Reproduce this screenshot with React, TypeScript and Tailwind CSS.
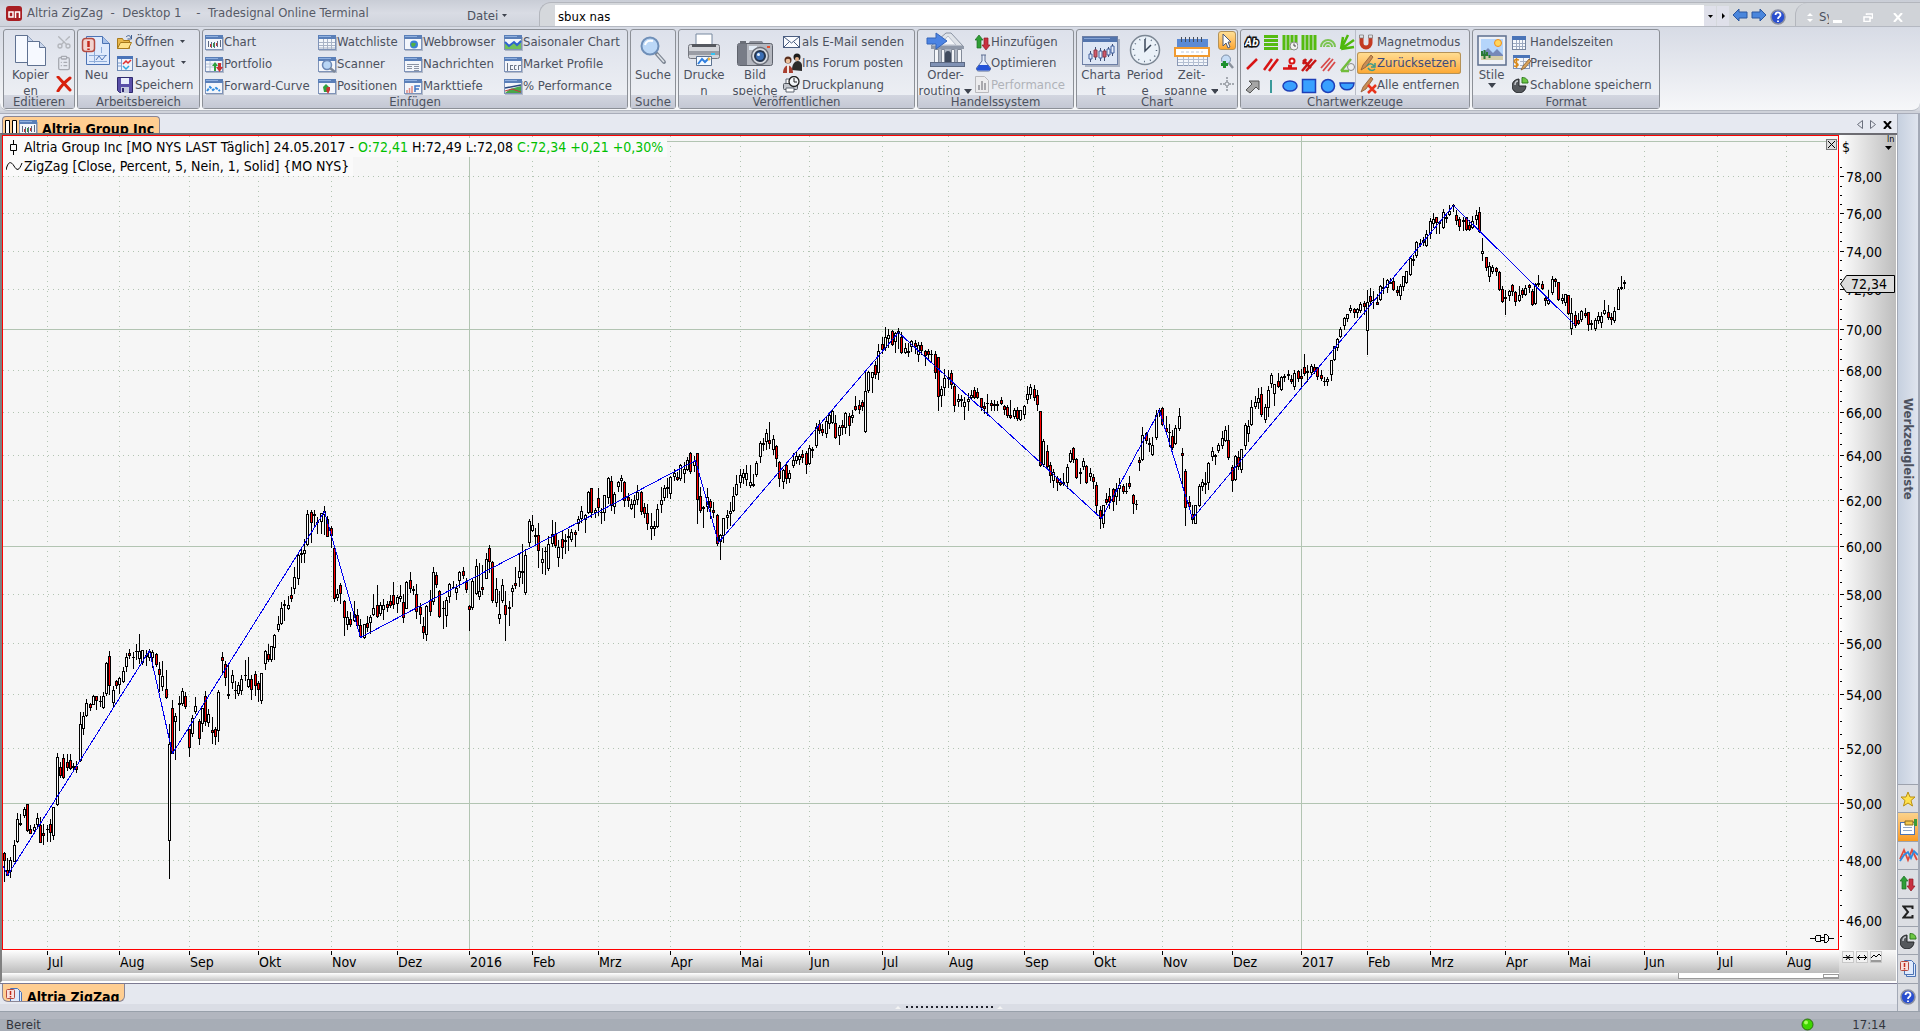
import React from 'react';
import { Scissors, ClipboardList } from 'lucide-react';

/**
 * Icons - small drawings for the ribbon, the tabs and the tool strip
 */
interface SvgProps {
  w: number;
  h: number;
  children: React.ReactNode;
}

const Svg = ({ w, h, children }: SvgProps) => (
  <svg width={w} height={h} viewBox={`0 0 ${w} ${h}`} className="shrink-0" aria-hidden="true">
    {children}
  </svg>
);

// Little window with a blue title bar, used by most of the insert buttons
const WindowIcon = ({ children }: { children?: React.ReactNode }) => (
  <Svg w={19} h={16}>
    <rect x="1" y="2" width="18" height="14" fill="#8f99ad" opacity=".6" />
    <rect x=".5" y=".5" width="17" height="14" fill="#f3f6fb" stroke="#7f93b8" />
    <rect x="0" y="0" width="18" height="4" fill="#5a7fb8" />
    <rect x="1" y="1" width="12" height="1" fill="#8fb0e0" />
    {children}
  </Svg>
);

const ChartIcon = () => (
  <WindowIcon>
    <path d="M3.500 6v6M6.500 7v6M9.500 7v6M12.500 6v6M15.500 5v7" stroke="#5b6780" />
    <path d="M5.500 9v3M11.500 8v3" stroke="#d0342c" />
    <path d="M8.500 8v4" stroke="#2fa13c" />
  </WindowIcon>
);
const PortfolioIcon = () => (
  <WindowIcon>
    <path d="M1 7h16M1 10h16M5 4v10" stroke="#b8c4d8" />
    <path d="M7 9l3-4 3 4h-2v5H9V9z" fill="#2fa13c" />
    <path d="M11 10h2V6h3v4h2l-3.500 5z" fill="#c83232" />
  </WindowIcon>
);
const CurveIcon = () => (
  <WindowIcon>
    <path d="M2 12l3-4 3 3 3-2 4 3" fill="none" stroke="#2e8be0" strokeWidth="2" strokeDasharray="3 1" />
  </WindowIcon>
);
const TableIcon = () => (
  <WindowIcon>
    <path d="M1 7.500h16M1 10.500h16M1 13h16M5.500 4v10M9.500 4v10M13.500 4v10" stroke="#a9b3c6" />
  </WindowIcon>
);
const ScannerIcon = () => (
  <WindowIcon>
    <circle cx="9" cy="8" r="4.500" fill="#b9d6f5" stroke="#6c88b5" strokeWidth="1.500" />
    <path d="M12 11l5 4" stroke="#7c8798" strokeWidth="2.500" />
  </WindowIcon>
);
const PositionIcon = () => (
  <WindowIcon>
    <path d="M5 8l3-3 3 3v5H6z" fill="#2fa13c" />
    <path d="M9 8h3v3l-2 4-2-4z" fill="#c83232" />
  </WindowIcon>
);
const BrowserIcon = () => (
  <WindowIcon>
    <circle cx="10" cy="9.500" r="4" fill="#3b82d6" />
    <path d="M7 9c2-3 3 0 5-1l-1 3-3 1z" fill="#52b043" />
  </WindowIcon>
);
const NewsIcon = () => (
  <WindowIcon>
    <path d="M3 7.500h12M3 9.500h5M3 11.500h5M10 9.500h5M10 11.500h5M10 13.500h5" stroke="#8b93a3" />
  </WindowIcon>
);
const DepthIcon = () => (
  <WindowIcon>
    <path d="M3 11v3M5.500 9v5M8 7v7" stroke="#e08a82" strokeWidth="1.500" />
    <path d="M11 13V7h5M11 10h4" stroke="#3f74c4" strokeWidth="1.500" fill="none" />
  </WindowIcon>
);
const SeasonIcon = () => (
  <WindowIcon>
    <path d="M1 14V8l4 3 5-4 3 3 4-5v9z" fill="#6fc15c" />
    <path d="M1 7l4 4 5-4 3 3 4-4" fill="none" stroke="#2e62d0" strokeWidth="2" />
  </WindowIcon>
);
const ProfileIcon = () => (
  <WindowIcon>
    <path d="M3.500 6v8M7 8.500h2M7 12.500h2M6.500 8v5M12.500 8.500h-2v4h2M14.500 13V8.500H17" stroke="#6b7587" fill="none" />
  </WindowIcon>
);
const PercentIcon = () => (
  <WindowIcon>
    <path d="M1 14l5-4 11-3v7z" fill="#4aa64a" />
    <path d="M1 9l16-3" stroke="#27477f" strokeWidth="1.500" />
    <path d="M1 12l7-2 9 3" stroke="#c23a3a" fill="none" />
  </WindowIcon>
);
const LayoutIcon = () => (
  <Svg w={16} h={16}>
    <rect x=".5" y="1.500" width="15" height="14" fill="#eef3fb" stroke="#6f8bb5" />
    <rect x="0" y="1" width="16" height="3" fill="#4a74b8" />
    <path d="M4.500 4v11M1 8h3M1 11h3" stroke="#7ea0d4" />
    <path d="M6 9l3-3 2 2 3-3" stroke="#e03030" fill="none" strokeWidth="1.500" />
    <path d="M6 11l3 3 3-3" stroke="#2fa7e0" fill="none" strokeWidth="1.500" />
  </Svg>
);

const CopyIcon = () => (
  <Svg w={34} h={33}>
    <g fill="#f6f9ff" stroke="#5f7191">
      <path d="M1.500 1.500h12l6 6v21h-18z" />
      <path d="M13.500 1.500v6h6" fill="#c9d6ec" />
      <path d="M13.500 7.500h12l6 6v18h-18z" />
      <path d="M25.500 7.500v6h6" fill="#c9d6ec" />
    </g>
  </Svg>
);
const NewIcon = () => (
  <Svg w={32} h={32}>
    <path d="M5.500 1.500h16l7 7v21h-23z" fill="#dfeafc" stroke="#4c73b4" />
    <path d="M21.500 1.500v7h7" fill="#a8c2ea" stroke="#4c73b4" />
    <path d="M8 20.500h18M8 26.500h18M13.500 12v16M20.500 12v6" stroke="#8fadd9" />
    <path d="M15 25l3-4 3 4 4-5" stroke="#4c73b4" fill="none" />
    <rect x="1.500" y="3.500" width="12" height="13" rx="3" fill="#f2d3cf" stroke="#b54a40" strokeWidth="1.500" />
    <path d="M7.500 6v6M7.500 13.500v1.500" stroke="#c4291c" strokeWidth="2.500" />
  </Svg>
);
const FolderIcon = () => (
  <Svg w={16} h={16}>
    <path d="M.5 14.500v-10h5l1 2h6v8z" fill="#e9b84c" stroke="#a87a1c" />
    <path d="M.5 14.500l3-6h11l-3 6z" fill="#ffe28a" stroke="#a87a1c" />
    <path d="M9 3c2-2 4-2 5 1M14.500 1v4h-4" stroke="#3f5f92" fill="none" />
  </Svg>
);
const SaveIcon = () => (
  <Svg w={16} h={16}>
    <path d="M.5.500h15v15h-13l-2-2z" fill="#5a4fa8" stroke="#2f2a6e" />
    <rect x="4" y="1" width="8" height="6" fill="#e9eefb" />
    <rect x="4" y="10" width="8" height="6" fill="#c6cbe0" />
    <rect x="5" y="11" width="2" height="4" fill="#2f2a6e" />
  </Svg>
);
const DeleteIcon = () => (
  <Svg w={16} h={16}>
    <path d="M2 1c3 3 8 9 12 13M14 2C9 6 5 10 2 15" stroke="#d8200c" strokeWidth="3" strokeLinecap="round" fill="none" />
  </Svg>
);
const SearchIcon = () => (
  <Svg w={28} h={32}>
    <path d="M17 18l8 9" stroke="#7e8794" strokeWidth="4" strokeLinecap="round" />
    <path d="M18 19l7 8" stroke="#dfe3e8" strokeWidth="1.500" />
    <circle cx="11" cy="11" r="8.500" fill="#bcd8f7" stroke="#6f8fb8" strokeWidth="2" />
    <path d="M6 10c1-4 4-5 8-4" stroke="#fff" strokeWidth="2" fill="none" />
  </Svg>
);
const PrinterIcon = () => (
  <Svg w={34} h={34}>
    <path d="M9 1h16v12H9z" fill="#fff" stroke="#76889f" />
    <rect x="1.500" y="11.500" width="31" height="14" rx="2" fill="#d3d5da" stroke="#74777f" />
    <rect x="2" y="18" width="30" height="4" fill="#9a9da5" />
    <path d="M5 11h24v3H5z" fill="#55585f" />
    <rect x="24" y="20" width="4" height="2" fill="#36c3f2" />
    <path d="M9.500 23.500h15v9h-15z" fill="#f5faff" stroke="#5c7291" />
    <path d="M11 31l4-5 3 3 4-4" stroke="#2f7fe0" strokeWidth="2" fill="none" />
    <circle cx="22" cy="26" r="1.500" fill="#f6b73c" />
  </Svg>
);
const CameraIcon = () => (
  <Svg w={38} h={27}>
    <path d="M12 4l2-3h12l2 3z" fill="#8b8f99" />
    <rect x="1.500" y="3.500" width="35" height="22" rx="2" fill="#b4b7bf" stroke="#5e626c" />
    <rect x="2" y="4" width="9" height="21" fill="#787c87" />
    <rect x="4" y="1" width="6" height="3" fill="#6a6e78" />
    <rect x="13" y="6" width="8" height="4" fill="#e3ecf7" />
    <circle cx="24" cy="16" r="8.500" fill="#d8dbe1" stroke="#6a6e78" strokeWidth="1.500" />
    <circle cx="24" cy="16" r="5" fill="#3c6fb5" stroke="#26364f" strokeWidth="2" />
    <circle cx="22.500" cy="14.500" r="1.500" fill="#e6f2ff" />
    <rect x="31" y="6" width="3" height="2" fill="#e8502f" />
  </Svg>
);
const MailIcon = () => (
  <Svg w={17} h={12}>
    <rect x=".5" y=".5" width="16" height="11" fill="#fbfcff" stroke="#4a5d80" />
    <path d="M1 1l7.500 6L16 1M1 11l5-5M16 11l-5-5" stroke="#4a5d80" fill="none" />
  </Svg>
);
const ForumIcon = () => (
  <Svg w={19} h={20}>
    <circle cx="14" cy="4" r="3.500" fill="#1d1d1d" />
    <path d="M9 17c0-11 9-11 10-5v6z" fill="#2c2c2c" />
    <circle cx="14" cy="6" r="2" fill="#e7b48e" />
    <circle cx="5" cy="7" r="3.500" fill="#5a2e1c" />
    <circle cx="5" cy="8" r="2.300" fill="#edc09c" />
    <path d="M0 20c0-10 10-10 10 0z" fill="#a83f30" />
    <path d="M4 12h2v8H4z" fill="#f2e8e4" />
  </Svg>
);
const PrintPlanIcon = () => (
  <Svg w={17} h={17}>
    <path d="M3 3h7v5H3z" fill="#fff" stroke="#5c6470" />
    <rect x=".5" y="7.500" width="14" height="6" rx="1" fill="#c4c7cd" stroke="#53575f" />
    <path d="M3 12h8v4H3z" fill="#fff" stroke="#5c6470" />
    <circle cx="11" cy="5.500" r="5" fill="#f4f6f9" stroke="#222" strokeWidth="1.300" />
    <path d="M11 2v4h3" stroke="#222" fill="none" />
  </Svg>
);
const BankIcon = () => (
  <Svg w={40} h={35}>
    <path d="M5 14L20 1h5l12 13z" fill="#dfe3e9" stroke="#8a93a3" />
    <path d="M22 4l8 9H14z" fill="#f4f6f9" stroke="#b6bdc9" />
    <rect x="5" y="14" width="33" height="3" fill="#8f98a8" />
    <rect x="8" y="17" width="27" height="14" fill="#aab2c0" />
    <path d="M8.500 17.500h4v13h-4zM15.500 17.500h3v13h-3zM25.500 17.500h3v13h-3zM31.500 17.500h4v13h-4z" fill="#f2f4f8" stroke="#838b99" />
    <path d="M19 31v-9c0-4 6-4 6 0v9z" fill="#3f4a5e" />
    <rect x="4.500" y="30.500" width="34" height="4" fill="#8092b5" stroke="#5d6a84" />
    <path d="M1 6h9V1l11 8-11 8v-5H1z" fill="#4c84e4" stroke="#3564b8" />
  </Svg>
);
const UpDownIcon = () => (
  <Svg w={16} h={17}>
    <path d="M0 6l4-5 4 5H6v8H2V6z" fill="#2f9e36" stroke="#1c6e23" strokeWidth=".7" />
    <path d="M7 11h2V4h4v7h2l-4 5z" fill="#c93040" stroke="#8c1824" strokeWidth=".7" />
  </Svg>
);
const FlaskIcon = () => (
  <Svg w={17} h={18}>
    <path d="M6 1h5M7 1v6L1.500 14c-.5 2 1 3 2 3h10c1 0 2.500-1 2-3L10 7V1" fill="#e6eefc" stroke="#5f6f92" />
    <path d="M4 11h9l2.500 3.500c0 1.500-1 2-2 2h-10c-1 0-2-.5-2-2z" fill="#2453d8" />
  </Svg>
);
const BarsIcon = () => (
  <Svg w={14} h={17}>
    <path d="M.5.500h9l4 4v12H.5z" fill="#ececee" stroke="#b9b9bd" />
    <path d="M3 14V9h2v5zM6 14V5h2v9zM9 14V7h2v7z" fill="#a8a8ad" />
  </Svg>
);
const ChartTypeIcon = () => (
  <Svg w={38} h={31}>
    <rect x="3" y="3" width="35" height="28" fill="#8690a5" opacity=".6" />
    <rect x=".5" y=".5" width="35" height="28" fill="#dde6f5" stroke="#6d7fa5" />
    <rect x="1" y="1" width="34" height="5" fill="#5274ad" />
    <rect x="2" y="2" width="26" height="1" fill="#86a3d4" />
    <path d="M8.500 15v11M13.500 11v13M18.500 12v13M22.500 13v12M26.500 11v10M30.500 8v12" stroke="#3f4f74" />
    <path d="M7 18h3v5H7zM17 15h3v7h-3zM25 13h3v6h-3zM29 10h3v7h-3z" fill="#e8eefa" stroke="#3f5f9e" />
    <path d="M12 14h3v7h-3zM21 15h3v6h-3z" fill="#d2586a" stroke="#8c3a48" />
  </Svg>
);
const ClockIcon = () => (
  <Svg w={32} h={33}>
    <circle cx="16" cy="16" r="14.500" fill="#eaf1f8" stroke="#7c8794" strokeWidth="1.500" />
    <circle cx="16" cy="16" r="11.500" fill="none" stroke="#5a6b80" strokeWidth="1.500" strokeDasharray="1 5" />
    <path d="M16 5v12l6-6" stroke="#3a4658" fill="none" strokeWidth="1.500" />
  </Svg>
);
const CalendarIcon = () => (
  <Svg w={36} h={31}>
    <rect x="3.500" y="3.500" width="30" height="26" fill="#f3f6fb" stroke="#8a98b4" />
    <rect x="3" y="3" width="31" height="8" fill="#5b8ad4" />
    <path d="M7.500 1v5M11.500 1v5M15.500 1v5M19.500 1v5M23.500 1v5M27.500 1v5" stroke="#444c5a" />
    <path d="M4 23.500h29M9.500 20v10M14.500 20v10M19.500 20v10M24.500 20v10M29.500 20v10M4 26.500h29" stroke="#b4bfd2" />
    <rect x="1" y="12" width="34" height="8" fill="#fff" stroke="#f09a30" strokeWidth="2" />
    <path d="M7 16h22" stroke="#dfe4ec" strokeWidth="2" strokeDasharray="3 2" />
  </Svg>
);
const PointerIcon = () => (
  <Svg w={12} h={16}>
    <path d="M2 1l8 8H7l2 5-2 1-2-5-3 3z" fill="#fff" stroke="#4a5878" />
  </Svg>
);
const ZoomInIcon = () => (
  <Svg w={16} h={16}>
    <path d="M9 8l5 6" stroke="#8a919c" strokeWidth="2.500" />
    <circle cx="7" cy="5.500" r="4.500" fill="#c6dcf5" stroke="#7d8fa8" />
    <path d="M5.500 7v7M2 10.500h7" stroke="#1c8f2d" strokeWidth="3" />
  </Svg>
);
const CrossIcon = () => (
  <Svg w={16} h={16}>
    <path d="M8 1v5M8 10v5M1 8h5M10 8h5" stroke="#8d929b" strokeWidth="1.500" strokeDasharray="2 1" />
    <path d="M6 6.500h4M6 9.500h4M6.500 6v4M9.500 6v4" stroke="#a5a9b0" />
  </Svg>
);
const StyleIcon = () => (
  <Svg w={30} h={32}>
    <rect x="1" y="1" width="28" height="29" fill="#eef1f7" stroke="#5e6f8e" strokeWidth="1.500" />
    <rect x="4" y="4" width="22" height="20" fill="#b5d5fb" />
    <path d="M4 20l7-7 5 5 4-4 6 6v4H4z" fill="#7688b8" />
    <path d="M4 21h22v4H4z" fill="#d5cda8" />
    <circle cx="21" cy="8" r="3.500" fill="#ffd55c" stroke="#f08f1e" />
    <path d="M7.500 24v-9M5 16v4h5v-3M12.500 23v-3" stroke="#2b7a34" strokeWidth="2" fill="none" />
  </Svg>
);
const HoursIcon = () => (
  <Svg w={15} h={15}>
    <rect x=".5" y="1.500" width="13" height="13" fill="#f7f9fd" stroke="#75849f" />
    <rect x="0" y="1" width="14" height="4" fill="#4a74b8" />
    <path d="M1 8.500h12M1 11.500h12M4.500 5v9M7.500 5v9M10.500 5v9" stroke="#9fabc2" />
  </Svg>
);
const PriceEditIcon = () => (
  <Svg w={19} h={16}>
    <rect x="1.500" y=".5" width="16" height="13" fill="#f3f6fb" stroke="#7f93b8" />
    <rect x="1" y="0" width="17" height="3" fill="#4a74b8" />
    <path d="M8 6.500h9M8 10.500h9M11.500 3v10" stroke="#a9b3c6" />
    <path d="M7 5c-5-2-6 2-3 3s3 4-2 3M4.500 3v10" stroke="#d98a1c" strokeWidth="1.500" fill="none" />
    <path d="M9 15l2-4 6-7 2 2-6 7z" fill="#d9a25a" stroke="#7a5426" strokeWidth=".7" />
  </Svg>
);
const PieIcon = () => (
  <Svg w={17} h={16}>
    <path d="M7 2a7 7 0 1 0 7 7H7z" fill="#55585c" stroke="#26282b" />
    <path d="M3 8c0-3 2-4 3-4" stroke="#c6c9ce" fill="none" strokeWidth="1.500" />
    <path d="M10 6V.5c4 0 6 2 6 5.500z" fill="#6cc644" stroke="#2f7a1c" />
  </Svg>
);
const MagnetIcon = () => (
  <Svg w={14} h={17}>
    <path d="M2.500 1v8a4.500 4.500 0 0 0 9 0V1" stroke="#c33a22" strokeWidth="4" fill="none" />
    <path d="M.5 1h4v3h-4zM9.500 1h4v3h-4z" fill="#dfe2e7" stroke="#777" strokeWidth=".7" />
  </Svg>
);
const PencilIcon = ({ mark }: { mark: 'reset' | 'remove' }) => (
  <Svg w={18} h={18}>
    <path d="M2 16l2-5 8-10 2 2-7 10z" fill="#c98d55" stroke="#8a5a33" strokeWidth=".8" />
    {mark === 'reset' ? (
      <path d="M8 12c2-3 5-3 7 0M16 9v4h-4M16 15c-2 2-5 2-7-1" stroke="#3b9a8c" strokeWidth="1.500" fill="none" />
    ) : (
      <path d="M9 9l8 8M17 9l-8 8" stroke="#e8341c" strokeWidth="2.500" />
    )}
  </Svg>
);
const HelpIcon = () => (
  <Svg w={16} h={16}>
    <circle cx="8" cy="8" r="7" fill="#2a4fd0" stroke="#8a8fa0" strokeWidth="1.500" />
    <path d="M5.500 6c0-3.500 5-3.500 5 0 0 2-2.500 1.500-2.500 4M8 11.500v1.500" stroke="#fff" strokeWidth="1.800" fill="none" />
  </Svg>
);
const DocAlertIcon = () => (
  <Svg w={16} h={17}>
    <path d="M6.500 2.500h7l2 2v12h-9z" fill="#dfeafc" stroke="#4c73b4" />
    <path d="M4.500.500h7l2 2v12h-9z" fill="#dfeafc" stroke="#4c73b4" />
    <rect x=".5" y="1.500" width="8" height="9" rx="1" fill="#f8e1de" stroke="#b54a40" />
    <path d="M4.500 3v4M4.500 8v1.500" stroke="#c4291c" strokeWidth="1.500" />
  </Svg>
);

/**
 * Drawing tools of the "Chartwerkzeuge" group, 3 rows of 6
 */
const drawingTools: { name: string; art: React.ReactNode }[] = [
  {
    name: 'Text',
    art: (
      <text x="1" y="12" fontSize="10" fontWeight="bold" fontStyle="italic" fill="#fff" stroke="#111" strokeWidth="3" paintOrder="stroke">
        Ab
      </text>
    ),
  },
  { name: 'Horizontal', art: <path d="M1 2.500h14M1 6.500h14M1 10.500h14M1 14.500h14" stroke="#55bb10" strokeWidth="3" /> },
  {
    name: 'Zeitzonen',
    art: (
      <>
        <path d="M2 1v15M6 1v15M10 1v15M14 1v8" stroke="#55bb10" strokeWidth="3" />
        <circle cx="12" cy="12" r="4" fill="#f2f2f2" stroke="#8b8b8b" />
        <path d="M12 9.500V12h2" stroke="#444" fill="none" />
      </>
    ),
  },
  { name: 'Vertikal', art: <path d="M2 1v15M6 1v15M10 1v15M14 1v15" stroke="#55bb10" strokeWidth="3" /> },
  {
    name: 'Bögen',
    art: (
      <path d="M1 13a7 7 0 0 1 14 0M4 13a4 4 0 0 1 8 0M7 13a1 1 0 0 1 2 0" fill="none" stroke="#7cc452" strokeWidth="2" />
    ),
  },
  { name: 'Fächer', art: <path d="M2 15L4 3M2 15L9 1M2 15l13-9M2 15l13-2" stroke="#4fb80c" strokeWidth="2.500" /> },
  { name: 'Linie', art: <path d="M3 13L13 3" stroke="#d81414" strokeWidth="2.500" /> },
  { name: 'Parallele', art: <path d="M1 14L9 3M6 15l9-12" stroke="#d81414" strokeWidth="2.500" /> },
  {
    name: 'Niveau',
    art: (
      <>
        <path d="M1 12.500h14M6 10h4" stroke="#d81414" strokeWidth="2.500" />
        <circle cx="10" cy="5" r="2.500" fill="#fff" stroke="#d81414" strokeWidth="2" />
      </>
    ),
  },
  { name: 'Gabel', art: <path d="M1 15L11 3M5 15L15 4M2 4l8 8M2 8l3-5" stroke="#c81414" strokeWidth="2.500" /> },
  { name: 'Kanal', art: <path d="M1 12L10 2M3 15L13 3M8 15l7-9" stroke="#d84a4a" strokeWidth="1.800" /> },
  {
    name: 'Winkel',
    art: (
      <>
        <path d="M2 15L12 3M2 15h8" stroke="#72bd3c" strokeWidth="2.500" />
        <circle cx="12" cy="11" r="3.500" fill="#eee" stroke="#888" />
      </>
    ),
  },
  { name: 'Pfeil', art: <path d="M2 12l6-6-3-3h10v9l-3-3-6 6z" fill="#a5a5a5" stroke="#555" /> },
  { name: 'Senkrechte', art: <path d="M8 2v13" stroke="#3a9a9a" strokeWidth="2" /> },
  { name: 'Ellipse', art: <ellipse cx="8" cy="8" rx="7" ry="5" fill="#39a0ff" stroke="#1d3fb8" strokeWidth="1.500" /> },
  { name: 'Rechteck', art: <path d="M1.500 1.500h13v13h-13z" fill="#39a0ff" stroke="#1d3fb8" strokeWidth="1.500" /> },
  { name: 'Kreis', art: <circle cx="8" cy="8" r="6.500" fill="#39a0ff" stroke="#1d3fb8" strokeWidth="1.500" /> },
  { name: 'Halbkreis', art: <path d="M1 5h14c0 9-14 9-14 0z" fill="#39a0ff" stroke="#1d3fb8" strokeWidth="1.500" /> },
];

/**
 * Ribbon building blocks
 */
interface GroupProps {
  title: string;
  className: string;
  children: React.ReactNode;
}

const Group = ({ title, className, children }: GroupProps) => (
  <section
    className={`flex h-20 shrink-0 flex-col rounded-[3px] border border-[#8c9097] bg-linear-to-b from-[#dde1eb] to-[#eff1f5] ${className}`}
  >
    <div className="flex h-[65px] w-full">{children}</div>
    <h2 className="h-[13px] bg-linear-to-b from-[#d3d6e0] to-[#c4c8d4] text-center leading-[13px]">{title}</h2>
  </section>
);

interface BigButtonProps {
  icon: React.ReactNode;
  lines: string[];
  className: string;
  arrow?: boolean;
}

const BigButton = ({ icon, lines, className, arrow }: BigButtonProps) => (
  <button type="button" className={`flex h-[65px] shrink-0 flex-col items-center overflow-hidden ${className}`}>
    <span className="flex h-[37px] shrink-0 items-end">{icon}</span>
    {lines.map((line, i) => (
      <span key={line} className="flex shrink-0 items-center gap-1 leading-4">
        {line}
        {arrow && i === lines.length - 1 && <Caret />}
      </span>
    ))}
  </button>
);

const Caret = () => (
  <Svg w={8} h={5}>
    <path d="M0 0h8L4 5z" fill="#3e434e" />
  </Svg>
);

interface SmallButtonProps {
  icon: React.ReactNode;
  label: string;
  menu?: boolean;
  active?: boolean;
  disabled?: boolean;
  iconBox?: string;
}

const SmallButton = ({ icon, label, menu, active, disabled, iconBox = 'w-[19px]' }: SmallButtonProps) => (
  <button
    type="button"
    disabled={disabled}
    className={`flex h-[22px] items-center whitespace-nowrap pl-[2px] ${
      active
        ? 'rounded-[3px] bg-linear-to-b from-[#ffdf94] to-[#fba62c] text-[#3c4a7c] ring-1 ring-[#b59257] ring-inset'
        : ''
    } ${disabled ? 'text-[#b0b3b9]' : ''}`}
  >
    <span className={`flex shrink-0 items-center pt-px ${iconBox}`}>{icon}</span>
    {label}
    {menu && (
      <span className="ml-[6px]">
        <Svg w={5} h={3}>
          <path d="M0 0h5L2.500 3z" fill="#3e434e" />
        </Svg>
      </span>
    )}
  </button>
);

const insertItems = [
  { label: 'Chart', icon: <ChartIcon /> },
  { label: 'Watchliste', icon: <TableIcon /> },
  { label: 'Webbrowser', icon: <BrowserIcon /> },
  { label: 'Saisonaler Chart', icon: <SeasonIcon /> },
  { label: 'Portfolio', icon: <PortfolioIcon /> },
  { label: 'Scanner', icon: <ScannerIcon /> },
  { label: 'Nachrichten', icon: <NewsIcon /> },
  { label: 'Market Profile', icon: <ProfileIcon /> },
  { label: 'Forward-Curve', icon: <CurveIcon /> },
  { label: 'Positionen', icon: <PositionIcon /> },
  { label: 'Markttiefe', icon: <DepthIcon /> },
  { label: '% Performance', icon: <PercentIcon /> },
];

const Ribbon = () => (
  <nav className="flex gap-[2px] rounded-b-lg border-b border-[#b4b8c1] bg-linear-to-b from-[#d7dbe5] to-[#f6f7f9] px-[3px] pt-[2px] pb-px">
    <Group title="Editieren" className="w-[72px]">
      <BigButton icon={<CopyIcon />} lines={['Kopier', 'en']} className="w-[52px] pl-px" />
      <div className="flex flex-col pt-px">
        <button type="button" aria-label="Ausschneiden" className="flex h-[22px] items-center">
          <Scissors size={16} color="#b3b6bc" className="-rotate-90" />
        </button>
        <button type="button" aria-label="Einfügen" className="flex h-[22px] items-center">
          <ClipboardList size={16} color="#a8abb2" />
        </button>
        <button type="button" aria-label="Löschen" className="flex h-[22px] items-center">
          <DeleteIcon />
        </button>
      </div>
    </Group>
    <Group title="Arbeitsbereich" className="w-[123px]">
      <BigButton icon={<NewIcon />} lines={['Neu']} className="w-[37px]" />
      <div className="flex flex-col pt-px">
        <SmallButton icon={<FolderIcon />} label="Öffnen" menu iconBox="w-[18px]" />
        <SmallButton icon={<LayoutIcon />} label="Layout" menu iconBox="w-[18px]" />
        <SmallButton icon={<SaveIcon />} label="Speichern" iconBox="w-[18px]" />
      </div>
    </Group>
    <Group title="Einfügen" className="w-[426px]">
      <div className="grid grid-cols-[113px_86px_100px_1fr] pt-px">
        {insertItems.map((item) => (
          <SmallButton key={item.label} icon={item.icon} label={item.label} />
        ))}
      </div>
    </Group>
    <Group title="Suche" className="w-[46px]">
      <BigButton icon={<SearchIcon />} lines={['Suche']} className="w-full" />
    </Group>
    <Group title="Veröffentlichen" className="w-[237px]">
      <BigButton icon={<PrinterIcon />} lines={['Drucke', 'n']} className="w-[50px]" />
      <BigButton icon={<CameraIcon />} lines={['Bild', 'speiche']} className="w-[52px]" />
      <div className="flex flex-col pt-px">
        <SmallButton icon={<MailIcon />} label="als E-Mail senden" />
        <SmallButton icon={<ForumIcon />} label="Ins Forum posten" />
        <SmallButton icon={<PrintPlanIcon />} label="Druckplanung" />
      </div>
    </Group>
    <Group title="Handelssystem" className="w-[157px]">
      <BigButton icon={<BankIcon />} lines={['Order-', 'routing']} className="w-[55px]" arrow />
      <div className="flex flex-col pt-px">
        <SmallButton icon={<UpDownIcon />} label="Hinzufügen" iconBox="w-4" />
        <SmallButton icon={<FlaskIcon />} label="Optimieren" iconBox="w-4" />
        <SmallButton icon={<BarsIcon />} label="Performance" iconBox="w-4" disabled />
      </div>
    </Group>
    <Group title="Chart" className="w-[162px]">
      <BigButton icon={<ChartTypeIcon />} lines={['Charta', 'rt']} className="w-[48px]" />
      <BigButton icon={<ClockIcon />} lines={['Period', 'e']} className="w-[40px]" />
      <BigButton icon={<CalendarIcon />} lines={['Zeit-', 'spanne']} className="w-[53px]" arrow />
      <div className="flex flex-col items-center pt-px">
        <button
          type="button"
          aria-label="Zeiger"
          className="flex h-5 w-[18px] items-center justify-center rounded-[3px] border border-[#b59257] bg-linear-to-b from-[#ffdf94] to-[#fba62c]"
        >
          <PointerIcon />
        </button>
        <button type="button" aria-label="Zoom" className="flex h-6 items-center">
          <ZoomInIcon />
        </button>
        <button type="button" aria-label="Fadenkreuz" className="flex h-[22px] items-center">
          <CrossIcon />
        </button>
      </div>
    </Group>
    <Group title="Chartwerkzeuge" className="w-[230px]">
      <div className="grid grid-cols-6 gap-x-[3px] border-r border-[#b9bdc8] pt-px pl-[3px]">
        {drawingTools.map((tool) => (
          <button key={tool.name} type="button" aria-label={tool.name} className="flex h-[22px] items-center">
            <Svg w={16} h={17}>
              {tool.art}
            </Svg>
          </button>
        ))}
      </div>
      <div className="flex w-[105px] flex-col pt-px pl-px">
        <SmallButton icon={<MagnetIcon />} label="Magnetmodus" iconBox="w-[18px]" />
        <SmallButton icon={<PencilIcon mark="reset" />} label="Zurücksetzen" iconBox="w-[18px]" active />
        <SmallButton icon={<PencilIcon mark="remove" />} label="Alle entfernen" iconBox="w-[18px]" />
      </div>
    </Group>
    <Group title="Format" className="w-[188px]">
      <BigButton icon={<StyleIcon />} lines={['Stile', '']} className="w-[37px]" arrow />
      <div className="flex flex-col pt-px">
        <SmallButton icon={<HoursIcon />} label="Handelszeiten" iconBox="w-[18px]" />
        <SmallButton icon={<PriceEditIcon />} label="Preiseditor" iconBox="w-[18px]" />
        <SmallButton icon={<PieIcon />} label="Schablone speichern" iconBox="w-[18px]" />
      </div>
    </Group>
  </nav>
);

const TitleBar = () => (
  <header className="flex h-[27px] border-b border-[#b4b8c1] bg-linear-to-b from-[#c9cdd6] via-[#d9dce4] to-[#cfd3dc]">
    <div className="flex w-[467px] shrink-0 items-center gap-1 pl-[6px]">
      <Svg w={17} h={15}>
        <rect width="16" height="15" rx="3" fill="#a81e22" />
        <path d="M3 6h4v5H3zM9.500 12V6h4v6" fill="none" stroke="#fff" strokeWidth="1.500" />
      </Svg>
      <h1 className="whitespace-pre text-[#565a66]">{'Altria ZigZag  -  Desktop 1    -  Tradesignal Online Terminal'}</h1>
    </div>
    <button type="button" className="flex w-[72px] shrink-0 items-center gap-1 pt-[5px]">
      Datei
      <Svg w={5} h={3}>
        <path d="M0 0h5L2.500 3z" fill="#3e434e" />
      </Svg>
    </button>
    <div className="mt-[2px] flex min-w-0 flex-1 rounded-tl-xl border-t border-l border-[#b3b6bd] bg-[#d5d8dc] pl-[15px]">
      <input
        aria-label="Symbol"
        defaultValue="sbux nas"
        className="mt-[2px] min-w-0 flex-1 bg-white px-[3px] pt-[3px] text-black outline-none"
      />
      <div className="mt-[3px] flex gap-px">
        <button type="button" aria-label="Liste" className="flex w-3 items-center justify-center bg-[#dfe0ea]">
          <Svg w={5} h={3}>
            <path d="M0 0h5L2.500 3z" fill="#000" />
          </Svg>
        </button>
        <button type="button" aria-label="Weiter" className="flex w-3 items-center justify-center bg-[#dfe0ea]">
          <Svg w={3} h={6}>
            <path d="M0 0l3 3-3 3z" fill="#000" />
          </Svg>
        </button>
      </div>
      <div className="flex w-[66px] items-center gap-[3px] pl-[3px]">
        <button type="button" aria-label="Zurück">
          <Svg w={16} h={14}>
            <path d="M1 7l6-6v3h8v6H7v3z" fill="#4a86dc" stroke="#2a56a0" />
          </Svg>
        </button>
        <button type="button" aria-label="Vor">
          <Svg w={16} h={14}>
            <path d="M15 7L9 1v3H1v6h8v3z" fill="#4a86dc" stroke="#2a56a0" />
          </Svg>
        </button>
        <button type="button" aria-label="Hilfe" className="pt-1">
          <HelpIcon />
        </button>
      </div>
      <div className="flex w-[125px] items-center rounded-tl-xl border-l border-[#b3b6bd] bg-[#d0d3d8] pt-[5px] pl-[11px]">
        <Svg w={6} h={9}>
          <path d="M0 3l3-3 3 3zM0 6l3 3 3-3z" fill="#fff" />
        </Svg>
        <span className="ml-[6px] w-[10px] overflow-hidden">Sy</span>
        <button type="button" aria-label="Minimieren" className="ml-1 pt-[3px]">
          <Svg w={10} h={8}>
            <path d="M0 5h9v3H0z" fill="#fff" />
          </Svg>
        </button>
        <button type="button" aria-label="Wiederherstellen" className="ml-5">
          <Svg w={10} h={9}>
            <path d="M3.500 2V1h6v4H7M1 4h6v4.500H1z" fill="none" stroke="#fff" strokeWidth="1.500" />
          </Svg>
        </button>
        <button type="button" aria-label="Schließen" className="ml-5">
          <Svg w={10} h={9}>
            <path d="M1 0l8 9M9 0L1 9" stroke="#fff" strokeWidth="2" />
          </Svg>
        </button>
      </div>
    </div>
  </header>
);

/**
 * Candles - x, high, body top, body bottom, low, falling (1) or rising (0).
 * Values are thirds of a pixel relative to the origin of the block.
 */
const candleBlocks = [
  {
    origin: [0, 460],
    rows: `13 1177 1180 1201 1265 1,22 1194 1231 1246 1246 1,31 1191 1200 1235 1253 0,43 1140 1156 1204 1204 0,52 1060 1078 1145 1147 0,
61 1063 1090 1092 1096 0,73 1042 1047 1066 1073 0,82 1033 1033 1111 1114 1,91 1095 1108 1120 1120 1,103 1093 1102 1111 1117 0,
112 1060 1075 1093 1105 0,121 1071 1096 1147 1147 1,130 1093 1120 1126 1154 1,142 1096 1108 1108 1143 0,151 1078 1093 1117 1145 1,
160 1042 1042 1127 1138 0,172 880 892 1033 1036 0,181 907 922 947 952 1,190 883 895 953 955 1,202 883 907 922 930 1,
211 883 901 924 928 1,220 910 920 922 930 1,229 904 919 929 937 1,241 757 793 901 904 0,250 757 769 805 823 0,259 717 730 766 768 0,
271 730 733 742 752 1,280 706 709 733 733 0,289 709 709 722 748 1,301 710 724 724 738 0,310 697 709 742 745 0,319 606 610 700 706 0,
328 574 589 676 703 1,340 680 691 727 743 0,349 661 664 677 685 1,358 652 655 673 700 0,370 622 634 664 668 0,379 580 592 620 635 0,
388 568 580 586 594 1,400 577 592 592 624 0,409 553 574 574 598 0,418 523 574 595 610 0,427 571 571 607 612 0,439 571 586 590 617 0,
448 568 574 592 600 0,457 571 577 592 622 0,469 580 583 613 620 1,478 607 628 643 695 1,487 604 649 680 690 0,499 631 688 712 716 1,
508 793 853 1141 1256 0,517 721 745 880 880 1,526 760 769 784 898 0,538 709 731 733 812 0,547 685 694 730 737 0,556 697 709 739 745 1,
568 808 808 862 889 1,577 767 775 820 830 0,586 713 739 754 760 0,598 778 784 835 853 1,607 745 745 790 815 0,616 694 709 784 796 1,
625 748 763 787 800 0,637 772 811 817 850 1,646 802 808 829 853 1,655 692 697 811 845 0,667 577 592 601 637 1,676 604 613 652 677 1,
685 613 704 707 715 1,697 631 646 667 685 0,706 665 691 691 715 0,715 667 676 700 706 0,724 646 658 692 703 0,736 601 646 646 661 0,
745 592 658 679 683 0,754 646 658 688 718 1,766 634 643 677 706 1,775 664 670 689 724 1,784 640 640 721 730 0,796 571 574 610 628 0,
805 553 583 598 605 1,814 559 559 598 604 0,823 523 526 562 598 0,835 469 494 509 514 0,844 427 445 491 494 0,853 421 434 436 481 0,
865 409 436 445 448 0,874 382 406 415 424 1,883 322 352 385 400 0,895 280 287 355 373 0,904 268 280 283 307 1,913 238 271 280 307 0,
922 151 163 253 256 0,934 151 157 187 247 1,943 151 163 166 196 0,952 173 187 187 220 0,964 160 160 184 220 0,973 139 154 163 224 0,
982 170 178 229 230 1,994 199 205 226 262 1,1003 265 265 415 424 1,1012 388 403 412 421 0,1021 370 376 400 430 1,1033 421 424 472 526 1,
1042 454 472 494 508 0,1051 457 478 493 500 1,1063 424 463 481 484 0,1072 448 466 496 505 1,1081 478 496 529 532 1,1093 493 493 532 535 0,
1102 469 490 502 514 1,1111 466 472 487 520 0,1120 403 445 463 466 0,1132 376 436 469 472 1,1141 427 436 460 466 0,1150 418 436 448 478 0,
1162 424 433 442 454 1,1171 406 424 436 442 1,1180 367 406 433 444 1,1192 406 412 430 457 0,1201 376 409 415 424 0,1210 403 427 472 487 1,
1219 364 367 445 446 0,1231 337 361 385 397 1,1240 379 388 391 403 0,1249 373 403 454 475 1,1261 430 442 463 490 1,1270 472 499 517 536 1,
1279 436 439 523 541 0,1291 391 421 454 466 1,1300 322 337 424 433 0,1309 337 346 373 382 1,1318 391 394 469 472 1,1330 424 445 445 506 0,
1339 412 421 466 499 0,1348 370 373 409 427 0,1360 364 382 382 385 0,1369 373 385 397 418 0,1378 334 337 361 382 0,1390 322 334 346 355 1,
1399 355 367 388 397 1`,
  },
  {
    origin: [460, 400],
    rows: `28 616 620 628 691 1,37 534 544 622 628 0,49 477 499 580 583 0,58 490 574 589 598 0,67 496 562 569 583 1,79 460 478 535 536 0,
88 436 445 484 517 1,97 484 487 601 607 1,109 535 568 607 619 0,118 574 643 655 670 0,127 538 556 601 607 0,136 574 616 643 721 1,
148 604 623 625 676 0,157 556 565 574 620 0,166 502 550 556 565 1,178 460 514 532 560 0,187 433 514 516 550 0,196 448 466 577 583 0,
208 358 364 427 439 0,217 346 376 391 394 0,226 385 406 409 436 0,235 370 406 451 502 1,247 445 478 487 520 0,256 442 454 454 523 0,
265 409 433 505 511 0,277 361 403 430 439 0,286 367 403 436 442 1,295 421 442 472 499 0,307 394 418 442 475 1,316 403 421 424 460 0,
325 388 409 412 451 0,334 388 397 418 424 0,346 391 397 403 439 1,355 349 358 370 390 0,364 319 334 355 367 0,376 343 346 358 397 0,
385 274 277 337 340 0,394 265 265 337 352 1,406 325 331 337 352 0,415 265 295 322 346 1,424 325 337 337 370 0,433 286 286 337 361 0,
445 232 235 292 310 0,454 229 244 316 331 1,463 277 283 319 340 0,475 244 247 259 274 0,484 226 235 241 274 0,493 244 247 301 319 1,
505 280 292 301 318 1,514 298 313 325 328 0,523 286 301 313 352 0,532 256 277 298 313 0,544 274 277 334 343 1,553 310 322 340 352 1,
562 313 340 370 388 1,574 340 379 385 418 0,583 364 379 385 406 0,592 313 328 379 382 0,604 262 301 313 336 0,613 256 265 292 301 0,
622 235 262 265 292 0,631 229 232 280 295 0,643 208 220 229 241 0,652 217 232 238 241 1,661 193 196 235 241 0,673 187 208 220 247 0,
682 172 181 208 210 0,691 157 160 214 220 1,703 169 184 196 214 0,712 160 160 298 370 1,721 262 289 331 337 1,730 320 322 325 382 0,
742 265 292 319 334 0,751 298 304 322 355 1,760 307 331 337 352 1,772 343 346 430 436 1,781 403 406 424 478 0,790 355 355 406 427 0,
802 331 346 352 385 0,811 307 334 340 376 0,820 262 289 331 334 0,829 226 253 283 286 0,841 208 226 247 262 0,850 208 220 232 250 0,
859 196 220 238 256 0,871 196 247 256 262 0,880 223 252 256 260 0,889 184 190 223 229 0,901 124 130 169 187 0,910 115 130 133 151 1,
919 88 100 124 148 0,928 67 121 130 145 1,940 106 118 148 163 0,949 136 139 175 199 1,958 184 187 235 259 1,970 208 211 244 265 0,
979 187 196 235 250 1,988 211 220 235 247 0,1000 160 181 196 202 0,1009 154 169 181 190 0,1018 163 169 178 193 0,1027 151 164 172 187 1,
1039 154 160 193 220 1,1048 136 145 190 192 0,1057 142 148 151 172 0,1069 70 82 136 142 0,1078 61 73 91 100 1`,
  },
  {
    origin: [820, 300],
    rows: `7 372 388 397 406 1,19 352 364 400 412 0,28 340 346 370 386 0,37 331 334 367 369 0,46 346 370 412 416 1,58 376 382 406 433 0,
67 361 376 382 403 1,76 337 340 382 400 0,88 340 349 376 406 1,97 331 346 352 366 0,106 289 319 328 330 1,118 301 316 328 340 1,
127 301 307 319 331 1,136 211 274 394 397 0,145 213 217 271 277 0,157 217 217 232 277 0,166 184 196 223 235 1,175 133 154 217 238 0,
187 112 133 148 160 1,196 82 112 142 151 0,205 88 106 115 142 0,217 91 94 133 136 1,226 97 100 124 157 0,235 85 94 97 145 0,
244 97 112 157 160 1,256 130 145 157 160 0,265 130 154 157 169 0,274 121 124 139 154 0,286 121 130 139 160 1,295 127 136 163 184 0,
304 126 136 151 163 1,316 151 154 166 196 1,325 148 154 163 175 1,334 151 163 163 187 0,346 154 163 217 235 1,355 172 172 289 331 1,
364 259 268 286 319 0,373 208 235 262 286 0,385 211 232 235 262 0,394 211 220 253 265 1,403 253 259 316 334 1,415 283 298 304 319 0,
424 286 298 301 319 0,433 292 307 319 358 0,445 280 298 304 331 0,454 271 286 292 298 0,463 262 271 292 294 1,472 265 277 292 295 1,
484 295 295 322 330 1,493 307 319 325 340 1,502 283 310 310 346 0,514 301 310 317 331 1,523 301 313 316 331 0,532 304 313 316 331 0,
544 292 301 310 313 1,553 316 319 328 343 1,562 316 322 346 352 1,571 301 346 352 355 1,583 325 331 349 355 0,592 322 331 355 361 1,
601 331 331 358 360 0,613 316 319 343 355 0,622 259 283 298 310 0,631 253 262 283 295 0,643 256 268 292 300 1,652 271 286 313 330 1,
661 334 334 496 498 1,670 418 424 493 499 0,682 436 454 499 502 1,691 487 496 526 547 1,700 508 517 541 561 0,712 529 534 547 571 1,
721 535 547 553 556 1,730 520 547 550 556 0,742 493 502 547 565 0,751 451 460 484 487 0,760 442 445 478 486 1,769 476 478 532 534 1,
781 505 517 520 550 0,790 475 484 499 508 0,799 496 499 547 549 1,811 505 520 529 541 0,820 523 532 544 565 1,829 547 556 616 640 1,
841 619 631 655 685 1,850 616 616 670 682 0,859 580 598 607 613 1,868 565 589 604 625 1,880 565 568 604 631 1,889 550 568 589 613 0,
898 535 556 565 601 0,910 553 559 574 580 1,919 550 574 574 580 0,928 529 550 559 565 1,940 583 586 610 640 1,949 601 613 613 628 0,
958 472 481 487 511 1,967 382 406 478 481 0,979 397 400 421 430 1,988 415 430 433 454 0,997 412 436 463 466 0,1009 331 346 412 418 0,
1018 325 331 337 349 0`,
  },
  {
    origin: [1160, 180],
    rows: `7 682 685 733 736 1,19 709 745 754 760 1,28 733 757 757 799 0,37 752 769 802 808 1,46 736 745 790 792 0,58 685 709 745 751 0,
67 805 820 826 910 1,76 868 874 982 1036 1,88 949 967 979 982 1,97 976 1003 1018 1030 1,106 976 976 1030 1031 0,118 913 919 976 980 0,
127 898 907 919 931 0,136 877 910 913 940 0,145 847 850 907 928 0,157 802 814 829 840 0,166 824 826 829 853 0,175 790 796 811 817 0,
187 754 775 796 805 0,196 739 751 781 784 0,205 736 781 832 838 1,217 856 862 901 934 1,226 826 829 898 900 0,235 814 832 859 868 1,
244 808 808 868 877 0,256 730 736 796 808 0,265 721 739 760 784 0,274 661 682 733 736 0,286 649 667 679 685 0,295 625 655 667 685 0,
304 622 643 703 709 1,316 673 682 718 727 0,325 619 631 682 709 0,334 580 586 610 622 0,343 613 613 640 676 0,355 580 604 619 621 1,
364 589 592 628 631 0,373 583 589 592 604 0,385 571 583 586 598 0,394 586 598 604 610 1,403 571 580 619 628 0,415 571 574 595 604 1,
424 568 589 595 619 1,433 523 562 580 586 1,442 556 574 577 604 0,454 553 559 577 588 0,463 553 562 574 580 1,472 562 562 589 598 1,
484 571 586 595 601 1,493 592 604 604 616 0,502 592 598 604 616 0,514 541 541 583 601 0,523 499 499 538 540 0,532 475 478 502 511 0,
541 442 448 469 472 0,553 412 415 436 448 0,562 403 403 415 424 0,571 376 385 391 397 0,583 385 388 397 412 1,592 385 388 397 412 0,
601 367 373 391 397 0,613 364 370 379 403 1,622 331 367 451 523 0,631 325 349 364 373 1,640 334 361 361 385 0,652 343 367 373 374 1,
661 316 319 358 361 0,670 295 322 325 340 0,682 298 301 322 337 0,691 295 307 310 307 0,700 292 304 328 330 1,712 319 331 337 346 1,
721 313 319 346 358 0,730 289 289 319 331 0,739 274 274 307 310 0,751 229 235 283 286 0,760 226 238 241 256 0,769 184 187 226 232 0,
781 178 190 193 200 0,790 172 181 186 195 1,799 151 163 196 198 0,811 115 124 160 175 0,820 100 118 130 142 0,829 112 112 127 160 1,
838 124 127 130 160 0,850 88 97 142 144 0,859 106 112 115 127 0,868 76 94 103 106 0,880 73 76 79 94 0,889 91 106 121 133 1,
898 112 118 139 151 1,910 112 121 124 151 0,919 112 112 148 150 1,928 121 136 148 150 1,937 109 124 142 144 0,949 91 106 118 133 0,
958 82 97 154 156 1,967 175 214 220 241 0,979 232 232 262 271 1,988 247 259 289 304 0,997 256 262 274 280 0,1009 262 265 274 286 1,
1018 274 277 328 330 1,1027 319 328 364 366 1,1036 331 352 355 403 0,1048 331 334 346 360 0,1057 313 316 334 346 1,1066 334 337 364 376 1,
1078 319 346 361 363 0,1087 325 331 343 352 1,1096 316 325 343 345 0,1108 313 316 322 337 1,1117 328 334 373 375 1,1126 310 313 370 372 0,
1135 286 310 313 319 0,1147 304 313 325 328 1,1156 346 355 361 376 1,1165 331 361 370 372 0,1177 289 298 337 343 0,1186 295 298 304 319 1,
1195 307 307 358 360 1,1207 343 355 361 370 0,1216 343 343 367 376 0,1225 346 346 400 402 1,1234 355 400 445 463 0,1246 394 406 436 442 1,
1255 400 421 430 433 1,1264 391 394 418 424 0,1276 385 400 406 412 1,1285 397 397 433 451 1,1294 421 430 433 448 0,1306 415 421 445 451 0,
1315 397 409 421 430 0,1324 397 409 427 442 0,1333 361 391 400 403 0,1345 376 397 412 418 1,1354 400 412 418 433 1,1363 382 394 421 427 0,
1375 322 328 388 389 0,1384 289 322 325 328 0,1393 300 307 310 325 0`,
  },
];

const candles = candleBlocks.flatMap(({ origin, rows }) =>
  rows.split(',').map((row) => {
    const [x, high, top, bottom, low, falling] = row.trim().split(' ').map(Number);
    const px = (v: number) => origin[1] + Math.floor(v / 3);
    return {
      x: origin[0] + Math.floor(x / 3),
      high: px(high),
      top: px(top),
      bottom: px(bottom),
      low: Math.max(px(low), px(bottom)),
      falling: falling === 1,
    };
  })
);

const zigzag =
  '3,866 7,875 149,650 172,753 324,511 360,637 695,460 718,542 898,332 1101,518 1159,410 1192,518 1453,205 1575,325';

const months: [number, string][] = [
  [47, 'Jul'], [119, 'Aug'], [189, 'Sep'], [258, 'Okt'], [331, 'Nov'], [397, 'Dez'], [469, '2016'], [532, 'Feb'],
  [598, 'Mrz'], [670, 'Apr'], [740, 'Mai'], [809, 'Jun'], [882, 'Jul'], [948, 'Aug'], [1024, 'Sep'], [1093, 'Okt'],
  [1162, 'Nov'], [1232, 'Dez'], [1301, '2017'], [1367, 'Feb'], [1430, 'Mrz'], [1505, 'Apr'], [1568, 'Mai'],
  [1644, 'Jun'], [1717, 'Jul'], [1786, 'Aug'],
];

// Logarithmic price scale
const priceY = (price: number) => Math.floor(546.5 - 1408.5 * Math.log(price / 60));

const gridPrices = Array.from({ length: 18 }, (_, i) => 46 + i * 2);
const tickPrices = Array.from({ length: 67 }, (_, i) => 45.5 + i * 0.5);

const Plot = () => (
  <svg
    viewBox="3 136 1835 813"
    preserveAspectRatio="none"
    shapeRendering="crispEdges"
    className="absolute inset-0 size-full"
    role="img"
    aria-label="Altria Group Inc Kerzenchart"
  >
    {months.map(([x, label]) => (
      <line
        key={x}
        x1={x + 0.5}
        x2={x + 0.5}
        y1={136}
        y2={949}
        stroke="#b2c4b2"
        strokeDasharray={label.startsWith('20') ? undefined : '1 4'}
      />
    ))}
    {gridPrices.map((price) => (
      <line
        key={price}
        x1={3}
        x2={1838}
        y1={priceY(price) + 0.5}
        y2={priceY(price) + 0.5}
        stroke="#b2c4b2"
        strokeDasharray={price % 10 === 0 ? undefined : '1 4'}
      />
    ))}
    {candles.map((c) => (
      <g key={c.x}>
        <rect x={c.x} y={c.high} width={1} height={c.low - c.high + 1} />
        <rect x={c.x - 1} y={c.top} width={3} height={c.bottom - c.top + 1} />
        {c.bottom - c.top > 1 && (
          <rect x={c.x} y={c.top + 1} width={1} height={c.bottom - c.top - 1} fill={c.falling ? '#f00' : '#fff'} />
        )}
      </g>
    ))}
    <polyline points={zigzag} fill="none" stroke="#0000f0" transform="translate(.5 .5)" />
    <path d="M1810 938.500h5M1829 938.500h5M1815.500 936v5M1816 935.500h5M1816 941.500h5M1820.500 935v7M1820 937.500h4M1820 940.500h4M1824.500 934v9M1824 934.500h3M1824 942.500h3M1828.500 936v5M1827 935.500h1M1827 941.500h1" stroke="#000" />
  </svg>
);

const PriceAxis = () => (
  <div className="relative w-[58px] shrink-0 border-r border-white bg-linear-to-r from-white to-[#bdbdbd]">
    <svg viewBox="1839 135 57 815" preserveAspectRatio="none" className="absolute inset-0 size-full text-sm">
      {tickPrices.map((price) => (
        <rect key={price} x={1840} y={priceY(price)} width={price % 2 === 0 ? 4 : 2} height={1} shapeRendering="crispEdges" />
      ))}
      {gridPrices.slice(0, 17).map((price) => (
        <text key={price} x={1846} y={priceY(price) + 6}>
          {price},00
        </text>
      ))}
      <text x={1842} y={152}>$</text>
      <text x={1887} y={142} fontSize={9}>ln</text>
      <path d="M1885 146h7l-3.500 4z" />
      <path d="M1840.500 284l6-8.500h48v17h-48z" fill="#dcdcdc" stroke="#000" />
      <text x={1851} y={289}>72,34</text>
    </svg>
  </div>
);

const TimeAxis = () => (
  <div className="flex h-[31px] shrink-0">
    <div className="flex min-w-0 flex-1 flex-col">
      <div className="relative h-[23px] bg-linear-to-b from-white to-[#bcbcbc]">
        <svg viewBox="2 950 1837 23" preserveAspectRatio="none" className="absolute inset-0 size-full text-sm">
          {months.map(([x, label]) => (
            <g key={x}>
              <rect x={x} y={951} width={1} height={4} shapeRendering="crispEdges" />
              <text x={x + 1} y={967}>{label}</text>
            </g>
          ))}
        </svg>
      </div>
      <div className="flex h-2 justify-end bg-linear-to-b from-white to-[#c4c4c4]">
        <div className="flex h-[6px] w-[161px] items-center justify-end border-b border-l border-[#9a9a9a] bg-white">
          <span className="h-1 w-4 border border-[#9a9a9a]" />
        </div>
      </div>
    </div>
    <div className="flex w-[58px] shrink-0 gap-[2px] border-r border-white bg-linear-to-b from-[#f8f8f8] to-[#c4c4c4] pt-px pl-[3px]">
      <button type="button" aria-label="Stauchen" className="h-3 w-3 border border-[#c8c8c8] bg-[#f2f2f2]">
        <Svg w={10} h={10}>
          <path d="M0 5.500h10M3 3l2 2.500L3 8M7 3L5 5.500 7 8" stroke="#000" fill="none" />
        </Svg>
      </button>
      <button type="button" aria-label="Strecken" className="h-3 w-3 border border-[#c8c8c8] bg-[#f2f2f2]">
        <Svg w={10} h={10}>
          <path d="M0 5.500h10M3 3L.5 5.500 3 8M7 3l2.500 2.500L7 8" stroke="#000" fill="none" />
        </Svg>
      </button>
      <button type="button" aria-label="Skalieren" className="h-3 w-3 border border-[#c8c8c8] bg-[#f2f2f2]">
        <Svg w={10} h={10}>
          <path d="M0 6l3-3 2 2 3-3 2 2" stroke="#000" fill="none" />
          <path d="M0 8h10v2H0z" fill="#999" />
        </Svg>
      </button>
    </div>
  </div>
);

const ChartPanel = () => (
  <main className="flex min-h-0 flex-1 flex-col border-t-2 border-b-2 border-l-2 border-t-[#6c6c72] border-b-white border-l-[#808080]">
    <div className="flex min-h-0 flex-1">
      <div className="relative min-w-0 flex-1 border border-[#f00] bg-[#f6f6f6]">
        <Plot />
        <div className="absolute top-0 left-0 text-sm leading-[19px] text-black">
          <div className="mt-[2px] flex w-fit items-center bg-[#fafafa] pr-1 pl-[5px]">
            <Svg w={16} h={15}>
              <path d="M5.500 0v4M5.500 11v4M2.500 4.500h6v6h-6z" fill="none" stroke="#000" />
            </Svg>
            <span className="whitespace-pre">Altria Group Inc [MO NYS LAST Täglich] 24.05.2017 - </span>
            <span className="whitespace-pre text-[#00c000]">O:72,41 </span>
            <span className="whitespace-pre">H:72,49 L:72,08 </span>
            <span className="text-[#00c000]">C:72,34 +0,21 +0,30%</span>
          </div>
          <div className="flex w-fit items-center bg-[#fafafa] pr-1 pl-[3px]">
            <Svg w={18} h={9}>
              <path d="M0 8c2-9 5-9 8-4s5 5 8-3" fill="none" stroke="#000" />
            </Svg>
            ZigZag [Close, Percent, 5, Nein, 1, Solid] {'{MO NYS}'}
          </div>
        </div>
        <button
          type="button"
          aria-label="Chart schließen"
          className="absolute top-[3px] right-[1px] flex h-[11px] w-[11px] items-center justify-center border border-[#777] bg-[#dcdcdc]"
        >
          <Svg w={9} h={9}>
            <path d="M1 1l7 7M8 1L1 8" stroke="#000" />
          </Svg>
        </button>
      </div>
      <PriceAxis />
    </div>
    <TimeAxis />
  </main>
);

const sideTools = [
  {
    name: 'Favoriten',
    icon: (
      <Svg w={16} h={16}>
        <path d="M8 1l2 5h5l-4 3.500 1.500 5.500L8 12l-4.500 3L5 9.500 1 6h5z" fill="#ffe14d" stroke="#b98f12" />
      </Svg>
    ),
  },
  {
    name: 'Eigenschaften',
    active: true,
    icon: (
      <Svg w={17} h={16}>
        <rect x=".5" y="3.500" width="14" height="12" fill="#fff" stroke="#4a74b8" />
        <path d="M3 8.500h9M3 11.500h9" stroke="#8fa5c8" />
        <path d="M5 2h8v4H5z" fill="#f3c64e" stroke="#8a6a1c" />
        <path d="M14 0h3v7h-3z" fill="#3a9a3a" />
      </Svg>
    ),
  },
  {
    name: 'Indikatoren',
    icon: (
      <Svg w={19} h={16}>
        <path d="M1 12L5 3l4 10 4-10 5 10" stroke="#e04a3a" fill="none" strokeWidth="1.800" />
        <path d="M1 14l4-6 4-3 3 6 3-7 4 4" stroke="#2f8be0" fill="none" strokeWidth="1.800" />
      </Svg>
    ),
  },
  {
    name: 'Handelssysteme',
    icon: <UpDownIcon />,
  },
  {
    name: 'Summe',
    icon: (
      <Svg w={12} h={14}>
        <path d="M10.500 4V1.500H1.500L6 7l-4.500 5.500h9V10" fill="none" stroke="#222" strokeWidth="2" />
      </Svg>
    ),
  },
  { name: 'Vorlagen', icon: <PieIcon /> },
  { name: 'Arbeitsbereiche', icon: <DocAlertIcon /> },
  { name: 'Hilfe', icon: <HelpIcon /> },
];

const ToolStrip = () => (
  <aside className="flex w-[23px] shrink-0 flex-col border-r-2 border-l border-[#a3a9b6] bg-linear-to-r from-[#c6d0df] to-[#dfe4ee]">
    <div className="flex flex-1 items-center justify-center">
      <span className="font-bold [writing-mode:vertical-rl]">Werkzeugleiste</span>
    </div>
    <div className="flex h-[227px] flex-col">
      {sideTools.map((tool) => (
        <button
          key={tool.name}
          type="button"
          aria-label={tool.name}
          className={`flex flex-1 items-center justify-center overflow-hidden border-t border-[#9da2ad] ${
            tool.active ? 'bg-linear-to-b from-[#fbd28a] to-[#f99b1c]' : 'bg-[#dcdee3]'
          }`}
        >
          {tool.icon}
        </button>
      ))}
    </div>
  </aside>
);

export default function App() {
  return (
    <div className="flex h-screen min-h-[600px] flex-col overflow-hidden bg-[#d6d9e0] font-['DejaVu_Sans_Condensed',Tahoma,sans-serif] text-[13px] text-[#4c515e]">
      <TitleBar />
      <Ribbon />
      <div className="h-[3px] shrink-0 border-b border-[#a9adba] bg-[#cfd2da]" />

      <div className="flex min-h-0 flex-1">
        <div className="flex min-w-0 flex-1 flex-col">
          <div className="flex h-[19px] shrink-0 items-end justify-between bg-[#e6e9f1] pl-[2px]">
            <div className="flex h-[17px] w-[158px] items-start overflow-hidden rounded-t-sm border border-b-0 border-[#8a8594] bg-[#ffce91] pl-px">
              <Svg w={15} h={16}>
                <path d="M1.500 3.500h4v14h-4zM8.500 3.500h4v14h-4z" fill="#fff" stroke="#000" />
              </Svg>
              <span className="pt-[3px]">
                <ChartIcon />
              </span>
              <span className="ml-1 text-sm leading-6 font-bold whitespace-nowrap text-black">Altria Group Inc</span>
            </div>
            <div className="flex items-center gap-[7px] pr-[5px] pb-[4px]">
              <button type="button" aria-label="Vorheriger Tab">
                <Svg w={6} h={9}>
                  <path d="M5.500.500v8l-5-4z" fill="none" stroke="#6a6f7c" />
                </Svg>
              </button>
              <button type="button" aria-label="Nächster Tab">
                <Svg w={6} h={9}>
                  <path d="M.5.500v8l5-4z" fill="none" stroke="#6a6f7c" />
                </Svg>
              </button>
              <button type="button" aria-label="Tab schließen">
                <Svg w={9} h={8}>
                  <path d="M1 0l7 8M8 0L1 8" stroke="#000" strokeWidth="2" />
                </Svg>
              </button>
            </div>
          </div>

          <ChartPanel />

          <div className="flex h-[21px] shrink-0 items-start border-t border-[#7c7a92] bg-[#e5e8ef] pl-[2px]">
            <div className="flex h-[18px] w-[123px] items-start gap-[5px] overflow-hidden rounded-b-md border border-t-0 border-[#8a8594] bg-[#ffce91] pt-1 pl-[3px]">
              <DocAlertIcon />
              <span className="text-sm leading-[18px] font-bold whitespace-nowrap text-black">Altria ZigZag</span>
            </div>
          </div>
          <div className="flex h-[7px] shrink-0 items-center justify-center bg-[#dadde5]">
            <Svg w={108} h={5}>
              <path d="M0 4l3-3 3 3zM102 4l3-3 3 3z" fill="#f4f4f4" />
              <path d="M11 2h88" stroke="#20222c" strokeWidth="2" strokeDasharray="2 3" />
            </Svg>
          </div>
        </div>
        <ToolStrip />
      </div>

      <footer className="flex h-5 shrink-0 items-center justify-between border-t border-[#98a0aa] bg-linear-to-b from-[#b2b6bf] from-35% to-[#a7adb6] to-35% pt-[6px] pr-[34px] pl-[6px] text-[#32353d]">
        <span>Bereit</span>
        <div className="flex items-center gap-[38px]">
          <Svg w={13} h={13}>
            <circle cx="6.500" cy="6.500" r="5.500" fill="#3ed600" stroke="#2a6a10" />
            <circle cx="5" cy="4.500" r="2" fill="#a6ff5c" />
          </Svg>
          <time>17:14</time>
        </div>
      </footer>
    </div>
  );
}
